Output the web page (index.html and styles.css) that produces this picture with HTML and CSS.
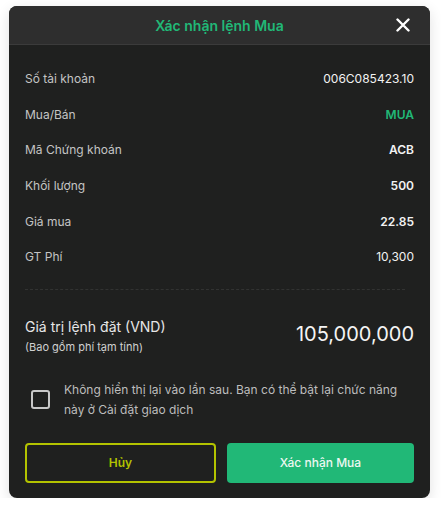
FILE: index.html
```html
<!DOCTYPE html>
<html lang="vi">

<head>
    <meta charset="UTF-8">
    <meta name="viewport" content="width=device-width, initial-scale=1.0">
    <title>Xác nhận lệnh Mua</title>
    <link rel="stylesheet" href="styles.css">
</head>

<body>

    <div class="modal">
        <div class="modal-header">
            <span class="modal-title">Xác nhận lệnh Mua</span>
            <button class="close-btn" aria-label="Đóng">
                <svg width="14" height="14" viewBox="0 0 14 14">
                    <path d="M1.5 1.5 L12.5 12.5 M12.5 1.5 L1.5 12.5" stroke="#fff" stroke-width="2.4" stroke-linecap="round" />
                </svg>
            </button>
        </div>

        <div class="modal-body">
            <div class="info-list">
                <div class="info-row">
                    <span class="info-label">Số tài khoản</span>
                    <span class="info-value normal">006C085423.10</span>
                </div>
                <div class="info-row">
                    <span class="info-label">Mua/Bán</span>
                    <span class="info-value buy">MUA</span>
                </div>
                <div class="info-row">
                    <span class="info-label">Mã Chứng khoán</span>
                    <span class="info-value">ACB</span>
                </div>
                <div class="info-row">
                    <span class="info-label">Khối lượng</span>
                    <span class="info-value">500</span>
                </div>
                <div class="info-row">
                    <span class="info-label">Giá mua</span>
                    <span class="info-value">22.85</span>
                </div>
                <div class="info-row">
                    <span class="info-label">GT Phí</span>
                    <span class="info-value normal">10,300</span>
                </div>
            </div>

            <div class="divider"></div>

            <div class="total">
                <div class="total-text">
                    <div class="total-label">Giá trị lệnh đặt (VND)</div>
                    <div class="total-note">(Bao gồm phí tạm tính)</div>
                </div>
                <div class="total-value">105,000,000</div>
            </div>

            <label class="remember">
                <input type="checkbox" id="remember">
                <span class="remember-box"></span>
                <span class="remember-text">Không hiển thị lại vào lần sau. Bạn có thể bật lại chức năng này ở Cài đặt giao dịch</span>
            </label>

            <div class="actions">
                <button class="btn btn-cancel">Hủy</button>
                <button class="btn btn-confirm">Xác nhận Mua</button>
            </div>
        </div>
    </div>

</body>

</html>
```

FILE: styles.css
```css
body {
    font-family: Inter, 'Noto Sans', sans-serif;
    margin: 0;
    background-color: #ffffff;
}

.modal {
    width: 421px;
    margin: 6px 0 0 9px;
    border-radius: 8px;
    overflow: hidden;
    background-color: #1f201f;
    box-shadow: 0 4px 14px rgba(0, 0, 0, 0.12);
}

.modal-header {
    position: relative;
    height: 38px;
    display: flex;
    align-items: center;
    justify-content: center;
    background-color: #2e2e2e;
    border-bottom: 1px solid #3b3b3b;
}

.modal-title {
    color: #21b877;
    font-size: 14px;
    font-weight: 600;
}

.close-btn {
    position: absolute;
    right: 20px;
    top: 12px;
    padding: 0;
    border: none;
    background: none;
    cursor: pointer;
    display: flex;
}

.modal-body {
    padding: 16px 16px 15px 16px;
}

.info-row {
    height: 35.6px;
    display: flex;
    align-items: center;
    justify-content: space-between;
    font-size: 12px;
}

.info-label {
    color: #c4c4c4;
}

.info-value {
    color: #f2f2f2;
    font-weight: 600;
}

.info-value.normal {
    font-weight: 400;
}

.info-value.buy {
    color: #21b877;
}

.divider {
    margin: 14px 9px 0 0;
    border-top: 1px dashed #323332;
}

.total {
    margin-top: 27px;
    display: flex;
    align-items: center;
    justify-content: space-between;
}

.total-label {
    color: #e6e6e6;
    font-size: 14px;
    line-height: 20px;
}

.total-note {
    margin-top: 2px;
    color: #d0d0d0;
    font-size: 11px;
    line-height: 16px;
}

.total-value {
    color: #f4f4f4;
    font-size: 20px;
    font-weight: 400;
    margin-top: -4px;
}

.remember {
    margin-top: 25px;
    display: flex;
    align-items: center;
    gap: 14px;
    padding-left: 6px;
    cursor: pointer;
}

.remember input {
    display: none;
}

.remember-box {
    flex: none;
    width: 15px;
    height: 15px;
    border: 2px solid #c8c8c8;
    border-radius: 3px;
}

.remember-text {
    color: #bdbdbd;
    font-size: 12px;
    line-height: 20px;
}

.actions {
    margin-top: 23px;
    display: flex;
    gap: 11px;
}

.btn {
    flex: 1;
    height: 40px;
    border-radius: 4px;
    font-family: inherit;
    font-size: 12px;
    cursor: pointer;
}

.btn-cancel {
    background-color: #1f201f;
    border: 2px solid #b3c300;
    color: #b3c300;
    font-weight: 600;
}

.btn-confirm {
    background-color: #21b877;
    border: none;
    color: #ecf7f1;
    font-weight: 500;
}
```
